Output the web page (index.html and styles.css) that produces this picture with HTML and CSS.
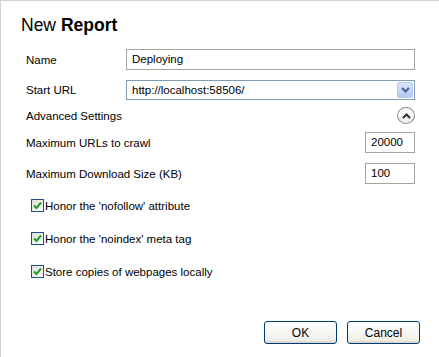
FILE: index.html
```html
<!DOCTYPE html>
<html lang="en">

<head>
    <meta charset="utf-8">
    <title>New Report</title>
    <link rel="stylesheet" href="styles.css">
</head>

<body>
    <div class="dialog">
        <h1 class="titel">New <b>Report</b></h1>

        <div class="felt">
            <label>Name</label>
            <div class="input bred">Deploying</div>
        </div>

        <div class="felt url">
            <label>Start URL</label>
            <div class="input bred vaelg">
                <span>http://localhost:58506/</span>
                <span class="pil">
                    <svg width="9" height="6" viewBox="0 0 9 6"><path d="M1 1 L4.5 4.5 L8 1" fill="none" stroke="#4d6185" stroke-width="2"/></svg>
                </span>
            </div>
        </div>

        <div class="felt avanceret">
            <label>Advanced Settings</label>
            <span class="cirkel">
                <svg width="9" height="6" viewBox="0 0 9 6"><path d="M1 5 L4.5 1.5 L8 5" fill="none" stroke="#333" stroke-width="2"/></svg>
            </span>
        </div>

        <div class="felt tal">
            <label>Maximum URLs to crawl</label>
            <div class="input smal">20000</div>
        </div>

        <div class="felt tal">
            <label>Maximum Download Size (KB)</label>
            <div class="input smal">100</div>
        </div>

        <div class="checks">
            <div class="check"><span class="boks"><svg width="11" height="11" viewBox="0 0 11 11"><path d="M2 5.5 L4.5 8 L9 2.5" fill="none" stroke="#21a121" stroke-width="2"/></svg></span>Honor the 'nofollow' attribute</div>
            <div class="check"><span class="boks"><svg width="11" height="11" viewBox="0 0 11 11"><path d="M2 5.5 L4.5 8 L9 2.5" fill="none" stroke="#21a121" stroke-width="2"/></svg></span>Honor the 'noindex' meta tag</div>
            <div class="check"><span class="boks"><svg width="11" height="11" viewBox="0 0 11 11"><path d="M2 5.5 L4.5 8 L9 2.5" fill="none" stroke="#21a121" stroke-width="2"/></svg></span>Store copies of webpages locally</div>
        </div>

        <div class="knapper">
            <button>OK</button>
            <button>Cancel</button>
        </div>
    </div>
</body></html>
```

FILE: styles.css
```css
* {
    padding: 0;
    margin: 0;
    box-sizing: border-box;
}

body {
    background-color: white;
    font-family: 'Liberation Sans', Arial, sans-serif;
    font-size: 11.5px;
    color: black;
}

.dialog {
    width: 439px;
    height: 357px;
    border-top: 1px solid #d4d4d4;
    border-left: 1px solid #d4d4d4;
    padding: 13px 24px 0 25px;
}

.titel {
    font-size: 17.5px;
    font-weight: normal;
    line-height: 22px;
    margin-left: -5px;
    margin-bottom: 13px;
}

.felt {
    display: flex;
    align-items: center;
    justify-content: space-between;
    height: 21px;
    margin-bottom: 10px;
}

.felt.url {
    height: 20px;
    margin-bottom: 7px;
}

.felt.avanceret {
    height: 17px;
    margin-bottom: 8px;
}

.input {
    height: 21px;
    border: 1px solid #a5a59c;
    padding: 0 5px;
    line-height: 19px;
    background-color: white;
}

.bred {
    width: 289px;
}

.smal {
    width: 50px;
}

.vaelg {
    height: 20px;
    display: flex;
    justify-content: space-between;
    align-items: center;
    border-color: #7f9db9;
    padding-right: 1px;
}

.pil {
    width: 16px;
    height: 16px;
    border: 1px solid #b9c9ef;
    border-radius: 2px;
    background: linear-gradient(#d9e4fd, #b4c8f6);
    display: flex;
    align-items: center;
    justify-content: center;
}

.cirkel {
    width: 18px;
    height: 17px;
    border: 1px solid #8e8e8e;
    border-radius: 50%;
    background: linear-gradient(#ffffff, #ececec);
    display: flex;
    align-items: center;
    justify-content: center;
}

.checks {
    margin-top: 14px;
    margin-left: 5px;
}

.check {
    display: flex;
    align-items: center;
    height: 15px;
    margin-bottom: 18px;
}

.boks {
    width: 13px;
    height: 13px;
    border: 1px solid #1c5180;
    background: linear-gradient(135deg, #dcdcd7, #ffffff);
    margin-right: 1px;
    display: flex;
    align-items: center;
    justify-content: center;
}

.knapper {
    display: flex;
    justify-content: flex-end;
    gap: 10px;
    margin-top: 42px;
    margin-right: -5px;
}

button {
    width: 73px;
    height: 23px;
    border: 1px solid #003c74;
    border-radius: 3px;
    background: linear-gradient(#ffffff, #f0f0ea 85%, #d6d0c5);
    font-family: 'Liberation Sans', Arial, sans-serif;
    font-size: 12px;
    color: black;
}
```
